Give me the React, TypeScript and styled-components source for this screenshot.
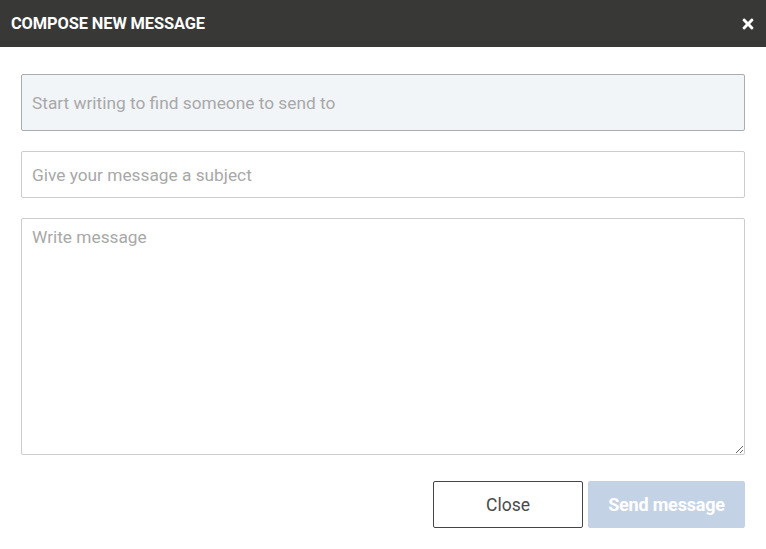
import React from "react";
import styled, { createGlobalStyle } from "styled-components";
import { FaTimes } from "react-icons/fa";

const Global = createGlobalStyle`
  body {
    margin: 0;
    background: #fff;
    font-family: Roboto, "Liberation Sans", sans-serif;
  }
  * { box-sizing: border-box; }
`;

const Modal = styled.div`
  width: 766px;
  height: 549px;
  display: flex;
  flex-direction: column;
`;

const Header = styled.div`
  height: 47px;
  background: #383937;
  display: flex;
  align-items: center;
  justify-content: space-between;
  padding: 0 10px 0 11px;
  flex-shrink: 0;
`;

const Title = styled.div`
  color: #fff;
  font-size: 16.4px;
  font-weight: 700;
  letter-spacing: -0.1px;
`;

const CloseIcon = styled.button`
  background: none;
  border: none;
  padding: 0;
  color: #fff;
  display: flex;
  cursor: pointer;
`;

const Body = styled.div`
  padding: 27px 21px 0 21px;
  display: flex;
  flex-direction: column;
`;

const Field = styled.input<{ $tall?: boolean; $shaded?: boolean }>`
  width: 100%;
  height: ${(p) => (p.$tall ? "57px" : "47px")};
  border: 1px solid ${(p) => (p.$shaded ? "#acacac" : "#cccccc")};
  border-radius: 2px;
  background: ${(p) => (p.$shaded ? "#f2f5f8" : "#fff")};
  padding: 0 10px;
  font-family: Roboto, "Liberation Sans", sans-serif;
  font-size: 17.3px;
  color: #333;
  margin-bottom: 20px;
  outline: none;
  &::placeholder {
    color: #a8a8a8;
  }
`;

const Message = styled.textarea`
  width: 100%;
  height: 237px;
  border: 1px solid #cccccc;
  border-radius: 2px;
  padding: 8px 10px;
  font-family: Roboto, "Liberation Sans", sans-serif;
  font-size: 17.3px;
  color: #333;
  outline: none;
  resize: vertical;
  &::placeholder {
    color: #a8a8a8;
  }
`;

const Actions = styled.div`
  display: flex;
  justify-content: flex-end;
  gap: 5px;
  margin-top: 26px;
`;

const Button = styled.button<{ $primary?: boolean }>`
  height: 47px;
  padding: 0;
  width: ${(p) => (p.$primary ? "157px" : "150px")};
  border-radius: 2px;
  font-family: Roboto, "Liberation Sans", sans-serif;
  font-size: ${(p) => (p.$primary ? "18px" : "17.5px")};
  font-weight: ${(p) => (p.$primary ? 700 : 400)};
  border: 1px solid ${(p) => (p.$primary ? "#c4d2e5" : "#444")};
  background: ${(p) => (p.$primary ? "#c4d2e5" : "#fff")};
  color: ${(p) => (p.$primary ? "#fff" : "#4a4a4a")};
  letter-spacing: ${(p) => (p.$primary ? "-0.2px" : "0")};
`;

export default function App() {
  return (
    <>
      <Global />
      <Modal>
        <Header>
          <Title>COMPOSE NEW MESSAGE</Title>
          <CloseIcon aria-label="Close">
            <FaTimes size={16} />
          </CloseIcon>
        </Header>
        <Body>
          <Field $tall $shaded placeholder="Start writing to find someone to send to" />
          <Field placeholder="Give your message a subject" />
          <Message placeholder="Write message" />
          <Actions>
            <Button>Close</Button>
            <Button $primary>Send message</Button>
          </Actions>
        </Body>
      </Modal>
    </>
  );
}
